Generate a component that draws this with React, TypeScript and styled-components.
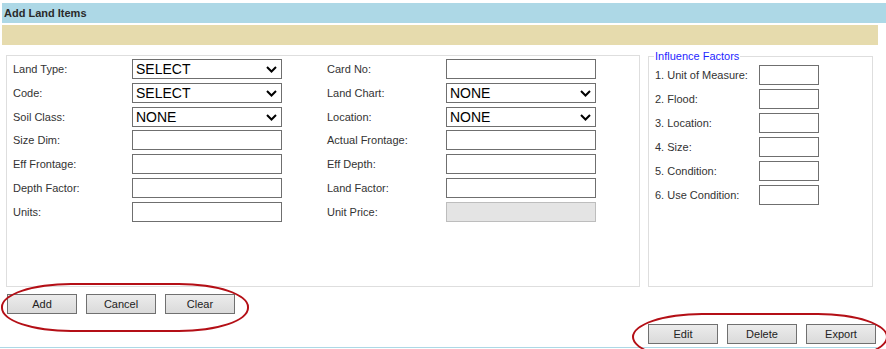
import styled, { createGlobalStyle } from 'styled-components';

const GlobalStyle = createGlobalStyle`
  body {
    margin: 0;
    background: #fff;
    font-family: "Liberation Sans", Arial, sans-serif;
  }
`;

type FieldDef = { label: string; kind: 'text' | 'select' | 'disabled'; value?: string };

const leftFields: FieldDef[][] = [
  [{ label: 'Land Type:', kind: 'select', value: 'SELECT' }, { label: 'Card No:', kind: 'text' }],
  [{ label: 'Code:', kind: 'select', value: 'SELECT' }, { label: 'Land Chart:', kind: 'select', value: 'NONE' }],
  [{ label: 'Soil Class:', kind: 'select', value: 'NONE' }, { label: 'Location:', kind: 'select', value: 'NONE' }],
  [{ label: 'Size Dim:', kind: 'text' }, { label: 'Actual Frontage:', kind: 'text' }],
  [{ label: 'Eff Frontage:', kind: 'text' }, { label: 'Eff Depth:', kind: 'text' }],
  [{ label: 'Depth Factor:', kind: 'text' }, { label: 'Land Factor:', kind: 'text' }],
  [{ label: 'Units:', kind: 'text' }, { label: 'Unit Price:', kind: 'disabled' }],
];

const factors = [
  '1. Unit of Measure:',
  '2. Flood:',
  '3. Location:',
  '4. Size:',
  '5. Condition:',
  '6. Use Condition:',
];

function Chevron() {
  return (
    <ChevronIcon width="11" height="7" viewBox="0 0 11 7">
      <path d="M1 1 L5.5 5.5 L10 1" fill="none" stroke="#000" strokeWidth="2" />
    </ChevronIcon>
  );
}

function Control({ field }: { field: FieldDef }) {
  if (field.kind === 'select') {
    return (
      <SelectWrap>
        <Select defaultValue={field.value}>
          <option value={field.value}>{field.value}</option>
        </Select>
        <Chevron />
      </SelectWrap>
    );
  }
  return <TextInput type="text" disabled={field.kind === 'disabled'} $disabled={field.kind === 'disabled'} />;
}

export default function App(): JSX.Element {
  return (
    <>
      <GlobalStyle />
      <Page>
        <TitleBar>Add Land Items</TitleBar>
        <MessageBar />

        <Panels>
          <MainBox>
            <FieldGrid>
              {leftFields.map((row, i) =>
                row.map((f, j) => (
                  <Field key={`${i}-${j}`}>
                    <Label>{f.label}</Label>
                    <Control field={f} />
                  </Field>
                ))
              )}
            </FieldGrid>
          </MainBox>

          <FactorBox>
            <Legend>Influence Factors</Legend>
            <FactorList>
              {factors.map((f) => (
                <FactorRow key={f}>
                  <FactorLabel>{f}</FactorLabel>
                  <FactorInput type="text" />
                </FactorRow>
              ))}
            </FactorList>
          </FactorBox>
        </Panels>

        <ButtonGroup>
          <Highlight $left={-6} $top={-11} $width={248} $height={49} />
          <Button>Add</Button>
          <Button>Cancel</Button>
          <Button>Clear</Button>
        </ButtonGroup>

        <RightActions>
          <ButtonGroup $flush>
            <Highlight $left={-16} $top={-11} $width={256} $height={48} />
            <Button>Edit</Button>
            <Button>Delete</Button>
            <Button>Export</Button>
          </ButtonGroup>
        </RightActions>

        <BottomRule />
      </Page>
    </>
  );
}

const Page = styled.div`
  width: 886px;
  height: 349px;
  overflow: hidden;
  padding-top: 3px;
  box-sizing: border-box;
`;

const TitleBar = styled.div`
  margin-left: 2px;
  height: 20px;
  background: #add8e6;
  color: #2a2a2a;
  font-size: 11px;
  font-weight: bold;
  line-height: 20px;
  padding-left: 2px;
`;

const MessageBar = styled.div`
  margin: 2px 8px 0 2px;
  height: 20px;
  background: #e6dbad;
`;

const Panels = styled.div`
  display: flex;
  align-items: flex-start;
  gap: 8px;
  margin: 5px 0 0 6px;
`;

const MainBox = styled.div`
  margin-top: 5px;
  width: 634px;
  height: 232px;
  box-sizing: border-box;
  border: 1px solid #dedede;
  padding: 3px 0 0 6px;
`;

const FieldGrid = styled.div`
  display: grid;
  grid-template-columns: 269px 269px;
  column-gap: 45px;
  row-gap: 3.83px;
`;

const Field = styled.div`
  display: flex;
  align-items: center;
  height: 20px;
`;

const Label = styled.span`
  width: 119px;
  flex-shrink: 0;
  font-size: 11px;
  color: #333;
`;

const SelectWrap = styled.div`
  position: relative;
  width: 150px;
  height: 20px;
`;

const Select = styled.select`
  appearance: none;
  width: 100%;
  height: 100%;
  box-sizing: border-box;
  border: 1px solid #6f6f6f;
  border-radius: 0;
  background: #fff;
  margin: 0;
  padding: 0 0 0 3px;
  font-family: "Liberation Sans", Arial, sans-serif;
  font-size: 14px;
  color: #000;
  outline: none;
`;

const ChevronIcon = styled.svg`
  position: absolute;
  right: 5px;
  top: 7px;
  pointer-events: none;
`;

const TextInput = styled.input<{ $disabled?: boolean }>`
  width: 150px;
  height: 20px;
  box-sizing: border-box;
  margin: 0;
  padding: 0 3px;
  border: 1px solid ${(p) => (p.$disabled ? '#bdbdbd' : '#6f6f6f')};
  background: ${(p) => (p.$disabled ? '#e4e4e4' : '#fff')};
  border-radius: 0;
  outline: none;
`;

const FactorBox = styled.fieldset`
  margin: 0;
  width: 225px;
  height: 237px;
  box-sizing: border-box;
  border: 1px solid #dedede;
  padding: 2px 0 0 6px;
`;

const Legend = styled.legend`
  margin-left: -1px;
  padding: 0 1px;
  font-size: 11px;
  line-height: 13px;
  color: #1f1fff;
`;

const FactorList = styled.div`
  display: flex;
  flex-direction: column;
  gap: 4px;
`;

const FactorRow = styled.div`
  display: flex;
  align-items: center;
  height: 20px;
`;

const FactorLabel = styled.span`
  width: 104px;
  font-size: 11px;
  color: #333;
`;

const FactorInput = styled.input`
  width: 60px;
  height: 20px;
  box-sizing: border-box;
  margin: 0;
  border: 1px solid #6f6f6f;
  border-radius: 0;
  outline: none;
`;

const ButtonGroup = styled.div<{ $flush?: boolean }>`
  position: relative;
  display: flex;
  gap: 9px;
  margin: ${(p) => (p.$flush ? '0' : '7px 0 0 7px')};
  width: max-content;
`;

const Highlight = styled.div<{ $left: number; $top: number; $width: number; $height: number }>`
  position: absolute;
  left: ${(p) => p.$left}px;
  top: ${(p) => p.$top}px;
  width: ${(p) => p.$width}px;
  height: ${(p) => p.$height}px;
  box-sizing: border-box;
  border: 2px solid #b40f16;
  border-radius: 70px / 24px;
  pointer-events: none;
`;

const Button = styled.button`
  width: 70px;
  height: 20px;
  box-sizing: border-box;
  margin: 0;
  padding: 0;
  border: 1px solid #707070;
  border-radius: 0;
  background: linear-gradient(#ececec, #dadada);
  font-family: "Liberation Sans", Arial, sans-serif;
  font-size: 11px;
  color: #222;
`;

const RightActions = styled.div`
  display: flex;
  justify-content: flex-end;
  padding-right: 10px;
  margin-top: 10px;
`;

const BottomRule = styled.div`
  margin-top: 3px;
  width: 877px;
  height: 1px;
  background: #add8e6;
`;
